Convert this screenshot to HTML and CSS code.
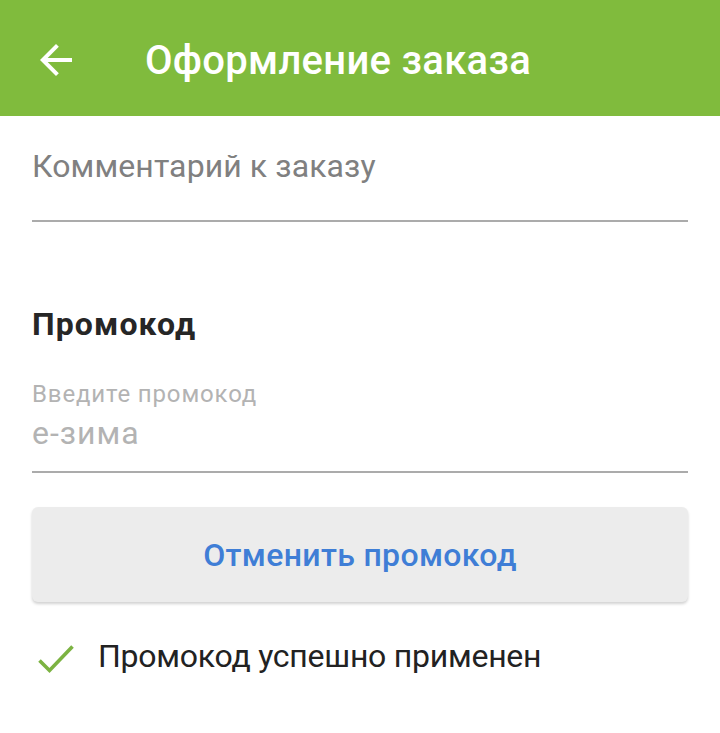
FILE: index.html
```html
<!DOCTYPE html>
<html lang="ru">
<head>
<meta charset="utf-8">
<title>Оформление заказа</title>
<link rel="stylesheet" href="styles.css">
</head>
<body>
<header class="toolbar">
  <span class="back">
    <svg width="48" height="48" viewBox="0 0 24 24"><path fill="#fff" d="M20 11H7.83l5.59-5.59L12 4l-8 8 8 8 1.41-1.41L7.83 13H20v-2z"/></svg>
  </span>
  <h1 class="title">Оформление заказа</h1>
</header>
<main class="content">
  <div class="field comment">
    <div class="placeholder">Комментарий к заказу</div>
  </div>
  <h2 class="section">Промокод</h2>
  <div class="field promo">
    <div class="label">Введите промокод</div>
    <div class="value">е-зима</div>
  </div>
  <button class="btn">Отменить промокод</button>
  <div class="status">
    <svg class="check" width="46" height="40" viewBox="0 0 46 40"><polyline points="7.5,20.5 17.5,30.5 40.5,6.5" fill="none" stroke="#7cb342" stroke-width="3.6"/></svg>
    <span class="status-text">Промокод успешно применен</span>
  </div>
</main>
</body>
</html>
```

FILE: styles.css
```css
* { box-sizing: border-box; }
html, body { margin: 0; padding: 0; background: #fff; }
body { font-family: Roboto, "Noto Sans", sans-serif; width: 720px; }

.toolbar {
  height: 116px;
  background: #80bb3d;
  display: flex;
  align-items: flex-start;
  padding-left: 32px;
}
.back { width: 48px; height: 48px; display: block; margin-top: 36px; }
.back svg { display: block; }
.title {
  margin: 41px 0 0 65px;
  color: #fff;
  font-size: 40px;
  font-weight: 500;
  line-height: 40px;
  letter-spacing: 0.3px;
}

.content { padding: 0 32px; }

.field { border-bottom: 2px solid #ababab; }
.comment { margin-top: 30px; padding-bottom: 34px; }
.placeholder { font-size: 32px; line-height: 40px; color: #808080; letter-spacing: 0.1px; }

.section {
  margin: 82px 0 0;
  font-size: 32px;
  line-height: 40px;
  font-weight: 700;
  color: #262626;
  letter-spacing: 1.1px;
}
.promo { margin-top: 35px; padding-bottom: 18px; }
.label { font-size: 24px; line-height: 30px; color: #b3b3b3; letter-spacing: 0.85px; }
.value { margin-top: 4px; font-size: 32px; line-height: 40px; color: #b3b3b3; letter-spacing: 1px; }

.btn {
  display: flex;
  align-items: center;
  justify-content: center;
  width: 100%;
  height: 95px;
  margin-top: 34px;
  border: none;
  border-radius: 6px;
  background: #ececec;
  box-shadow: 0 2px 3px rgba(0,0,0,0.18);
  font-family: Roboto, "Noto Sans", sans-serif;
  font-size: 32px;
  font-weight: 500;
  letter-spacing: 0.35px;
  color: #3f7ed6;
  padding: 0;
}

.status {
  display: flex;
  align-items: flex-start;
  margin-top: 34px;
  height: 40px;
}
.check { display: block; margin-top: 4px; }
.status-text {
  margin-left: 20px;
  font-size: 32px;
  line-height: 40px;
  color: #222;
  letter-spacing: -0.25px;
}
```
